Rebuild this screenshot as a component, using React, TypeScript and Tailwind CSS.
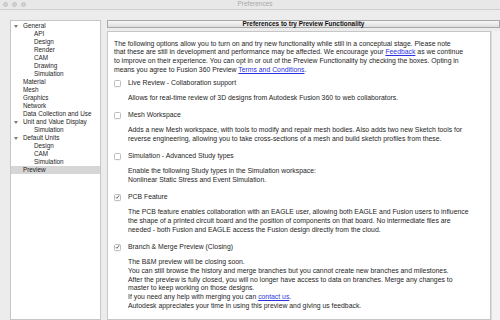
import React from "react";

const tree: { label: string; depth: number; open?: boolean; selected?: boolean }[] = [
  { label: "General", depth: 0, open: true },
  { label: "API", depth: 1 },
  { label: "Design", depth: 1 },
  { label: "Render", depth: 1 },
  { label: "CAM", depth: 1 },
  { label: "Drawing", depth: 1 },
  { label: "Simulation", depth: 1 },
  { label: "Material", depth: 0 },
  { label: "Mesh", depth: 0 },
  { label: "Graphics", depth: 0 },
  { label: "Network", depth: 0 },
  { label: "Data Collection and Use", depth: 0 },
  { label: "Unit and Value Display", depth: 0, open: true },
  { label: "Simulation", depth: 1 },
  { label: "Default Units", depth: 0, open: true },
  { label: "Design", depth: 1 },
  { label: "CAM", depth: 1 },
  { label: "Simulation", depth: 1 },
  { label: "Preview", depth: 0, selected: true },
];

function Link({ children }: { children: React.ReactNode }) {
  return <span className="text-[#2d32e0] underline">{children}</span>;
}

function Checkbox({ checked }: { checked?: boolean }) {
  return (
    <span className="w-[7px] h-[7px] shrink-0 rounded-[1.5px] border border-[#bdbdbd] bg-white shadow-[0_0.5px_0.5px_rgba(0,0,0,0.08)] flex items-center justify-center">
      {checked && (
        <svg width="6" height="6" viewBox="0 0 6 6">
          <path d="M1 3.2 L2.4 4.6 L5 1" fill="none" stroke="#333" strokeWidth="0.9" />
        </svg>
      )}
    </span>
  );
}

function Option({
  label,
  checked,
  lines,
}: {
  label: string;
  checked?: boolean;
  lines: React.ReactNode[];
}) {
  return (
    <div>
      <div className="h-[9px] flex items-center gap-[7px]">
        <Checkbox checked={checked} />
        <span>{label}</span>
      </div>
      <div className="mt-[6.5px] pl-[14px]">
        {lines.map((l, i) => (
          <div key={i} className="whitespace-nowrap">
            {l}
          </div>
        ))}
      </div>
    </div>
  );
}

export default function App() {
  return (
    <div
      className="w-[500px] h-[320px] overflow-hidden bg-[#ececec] flex flex-col text-[#1e1e1e]"
      style={{ fontFamily: '"Liberation Sans", Arial, sans-serif' }}
    >
      {/* title bar */}
      <div className="h-[10px] shrink-0 flex items-center bg-[#e8e8e8] border-b border-[#cfcfcf]">
        <div className="w-[40px] flex items-center gap-[4px] pl-[3px]">
          <span className="w-[5px] h-[5px] rounded-full bg-[#d2d2d2] border border-[#c4c4c4]" />
          <span className="w-[5px] h-[5px] rounded-full bg-[#d2d2d2] border border-[#c4c4c4]" />
          <span className="w-[5px] h-[5px] rounded-full bg-[#d2d2d2] border border-[#c4c4c4]" />
        </div>
        <div className="flex-1 text-center text-[6.5px] text-[#a9a9a9] leading-none pl-[10px]">Preferences</div>
        <div className="w-[40px]" />
      </div>

      <div className="flex-1 flex pt-[10px] pl-[10px] gap-[6px] min-h-0 leading-[8.75px]">
        {/* sidebar */}
        <div className="w-[91px] shrink-0 bg-white border border-[#c6c6c6] pt-[1px] text-[6.35px]">
          {tree.map((t, i) => (
            <div
              key={i}
              className={`h-[8px] flex items-center whitespace-nowrap ${t.selected ? "bg-[#d6d6d6]" : ""}`}
              style={{ paddingLeft: t.depth === 0 ? 3 : 23 }}
            >
              {t.depth === 0 && (
                <span className="w-[9px] shrink-0 flex items-center">
                  {t.open && (
                    <svg width="4" height="3" viewBox="0 0 4 3">
                      <path d="M0 0 H4 L2 3 Z" fill="#7a7a7a" />
                    </svg>
                  )}
                </span>
              )}
              <span>{t.label}</span>
            </div>
          ))}
        </div>

        {/* right side */}
        <div className="flex-1 flex flex-col min-w-0">
          <div className="h-[8px] shrink-0 border border-[#a8a8a8] bg-gradient-to-b from-[#f7f7f7] to-[#dedede] flex items-center justify-center font-bold text-[6.4px] text-[#111]">
            Preferences to try Preview Functionality
          </div>
          <div className="flex-1 flex mt-[3px]">
            <div className="w-[384px] shrink-0 bg-white border border-[#c6c6c6] pt-[7.5px] pl-[6px] flex flex-col text-[6.85px]">
              <div>
                <div className="whitespace-nowrap">
                  The following options allow you to turn on and try new functionality while still in a conceptual stage. Please note
                </div>
                <div className="whitespace-nowrap">
                  that these are still in development and performance may be affected. We encourage your <Link>Feedback</Link> as we continue
                </div>
                <div className="whitespace-nowrap">
                  to improve on their experience. You can opt in or out of the Preview Functionality by checking the boxes. Opting in
                </div>
                <div className="whitespace-nowrap">
                  means you agree to Fusion 360 Preview <Link>Terms and Conditions</Link>.
                </div>
              </div>
              <div className="mt-[4px] flex flex-col gap-[8px]">
                <Option
                  label="Live Review - Collaboration support"
                  lines={["Allows for real-time review of 3D designs from Autodesk Fusion 360 to web collaborators."]}
                />
                <Option
                  label="Mesh Workspace"
                  lines={[
                    "Adds a new Mesh workspace, with tools to modify and repair mesh bodies. Also adds two new Sketch tools for",
                    "reverse engineering, allowing you to take cross-sections of a mesh and build sketch profiles from these.",
                  ]}
                />
                <Option
                  label="Simulation - Advanced Study types"
                  lines={[
                    "Enable the following Study types in the Simulation workspace:",
                    "Nonlinear Static Stress and Event Simulation.",
                  ]}
                />
                <Option
                  label="PCB Feature"
                  checked
                  lines={[
                    "The PCB feature enables collaboration with an EAGLE user, allowing both EAGLE and Fusion users to influence",
                    "the shape of a printed circuit board and the position of components on that board. No intermediate files are",
                    "needed - both Fusion and EAGLE access the Fusion design directly from the cloud.",
                  ]}
                />
                <Option
                  label="Branch & Merge Preview (Closing)"
                  checked
                  lines={[
                    "The B&M preview will be closing soon.",
                    "You can still browse the history and merge branches but you cannot create new branches and milestones.",
                    "After the preview is fully closed, you will no longer have access to data on branches. Merge any changes to",
                    "master to keep working on those designs.",
                    <>
                      If you need any help with merging you can <Link>contact us</Link>.
                    </>,
                    "Autodesk appreciates your time in using this preview and giving us feedback.",
                  ]}
                />
              </div>
            </div>
            <div className="flex-1 bg-[#f3f3f3] border-l border-[#dcdcdc]" />
          </div>
        </div>
      </div>
    </div>
  );
}
